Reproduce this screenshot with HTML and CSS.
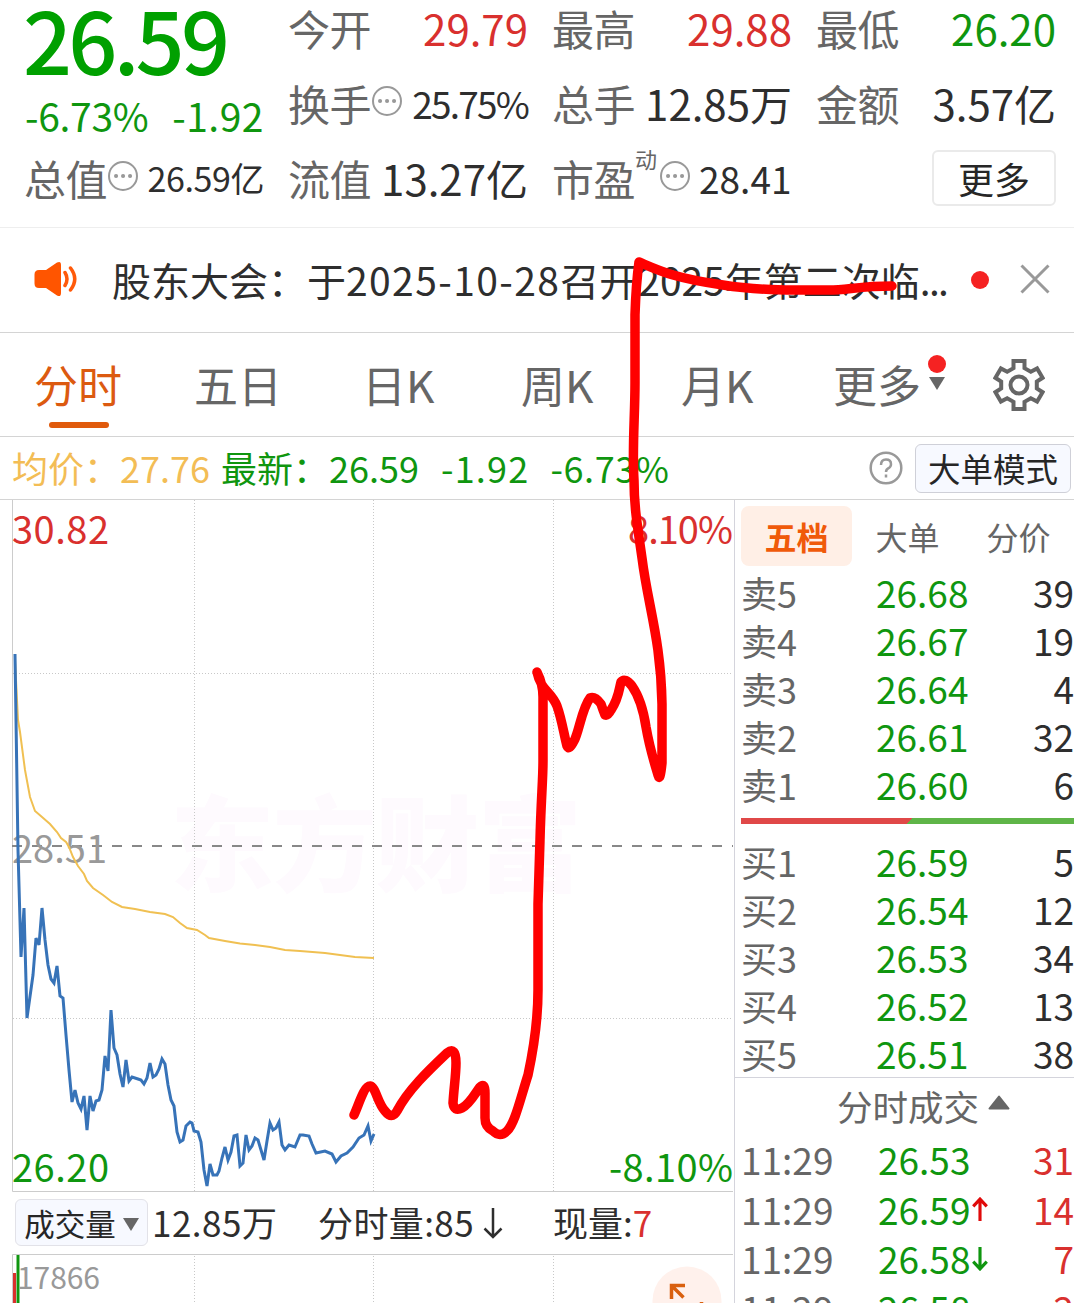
FILE: index.html
```
<!DOCTYPE html>
<html lang="zh-CN">
<head>
    <meta charset="UTF-8">
    <meta name="viewport" content="width=device-width, initial-scale=1.0">
    <title>分时行情</title>
    <link rel="stylesheet" href="styles.css">
</head>
<body>
    <header class="quote">
        <div class="price-block">
            <div class="price">26.59</div>
            <div class="change"><span>-6.73%</span><span class="amount">-1.92</span></div>
        </div>
        <div class="cell"><label>今开</label><b class="up">29.79</b></div>
        <div class="cell"><label>最高</label><b class="up">29.88</b></div>
        <div class="cell"><label>最低</label><b class="down">26.20</b></div>
        <div class="cell">
            <label>换手</label>
            <svg class="dots" viewBox="0 0 32 32"><circle cx="16" cy="16" r="14"/><path d="M9 16h.1M16 16h.1M23 16h.1"/></svg>
            <b class="mid">25.75%</b>
        </div>
        <div class="cell"><label>总手</label><b>12.85万</b></div>
        <div class="cell"><label>金额</label><b>3.57亿</b></div>
        <div class="cell">
            <label>总值</label>
            <svg class="dots" viewBox="0 0 32 32"><circle cx="16" cy="16" r="14"/><path d="M9 16h.1M16 16h.1M23 16h.1"/></svg>
            <b class="small">26.59亿</b>
        </div>
        <div class="cell"><label>流值</label><b>13.27亿</b></div>
        <div class="cell">
            <label>市盈</label><sup>动</sup>
            <svg class="dots" viewBox="0 0 32 32"><circle cx="16" cy="16" r="14"/><path d="M9 16h.1M16 16h.1M23 16h.1"/></svg>
            <b class="pe">28.41</b>
        </div>
        <div class="cell"><button class="more">更多</button></div>
    </header>

    <div class="notice">
        <svg class="horn" viewBox="0 0 44 36">
            <path class="horn-body" d="M5 9h7L23 1.500Q27 -.5 27 4v28q0 4.500-4 2.500L12 27H5q-4.500 0-4.500-4.500v-9Q.5 9 5 9z"/>
            <path d="M31 11.500q4 6.500 0 13M36.500 7q8.500 11 0 22"/>
        </svg>
        <p>股东大会：于<span class="date">2025-10-28</span>召开2025年第二次临<span class="ell">...</span></p>
        <i class="red-dot"></i>
        <svg class="close" viewBox="0 0 30 30"><path d="M1.500 1.500l27 27M28.500 1.500l-27 27"/></svg>
    </div>

    <nav class="tabs">
        <a class="active">分时</a>
        <a>五日</a>
        <a>日K</a>
        <a>周K</a>
        <a>月K</a>
        <a class="has-dot">更多<i class="caret"></i></a>
        <svg class="gear" viewBox="0 0 52 52">
            <path d="M20.500 2h11v7.200l6.300 3.600 6.300-3.400 5.500 9.400-5.800 3.700v7l5.800 3.700-5.500 9.400-6.300-3.400-6.300 3.600V50h-11v-7.200l-6.300-3.600-6.300 3.400-5.500-9.400 5.800-3.700v-7l-5.800-3.700 5.500-9.400 6.300 3.400 6.300-3.600z"/>
            <circle cx="26" cy="26" r="8.500"/>
        </svg>
    </nav>

    <div class="summary">
        <span class="avg">均价：27.76</span>
        <span class="last">最新：26.59</span>
        <span class="last diff">-1.92</span>
        <span class="last pct">-6.73%</span>
        <svg class="help" viewBox="0 0 34 34"><circle cx="17" cy="17" r="15.300"/><path d="M12 14q0-5.500 5-5.500t5 4.700q0 2.500-2.500 4Q17 18.500 17 21M17 23.500v3"/></svg>
        <button class="mode">大单模式</button>
    </div>

    <main class="main">
        <section class="left">
            <svg class="chart" viewBox="0 500 734 692">
                <text class="watermark" x="170" y="884" textLength="412">东方财富</text>
                <path class="grid" d="M194.500 500V1191M373.500 500V1191M553.500 500V1191M13 673.500H733M13 1018.500H733"/>
                <path class="frame" d="M12.500 500V1191.500H733"/>
                <path class="prev" d="M12 846H733"/>
                <text class="up" x="12" y="544" textLength="97">30.82</text>
                <text class="up" x="628" y="544" textLength="105">8.10%</text>
                <text class="flat" x="12" y="863" textLength="95">28.51</text>
                <text class="down" x="12" y="1182" textLength="97">26.20</text>
                <text class="down" x="609" y="1182" textLength="124">-8.10%</text>
                <polyline class="avg-line" points="15,660 17,700 18,720 20,732 25,770 30,797 35,811 42,817 50,824 57,832 61,838 66,842 69,847 73,857 78,866 84,874 87,881 93,888 103,895 112,902 122,907 135,909 150,912 165,914 173,917 180,923 187,928 197,930 205,935 209,938 225,941 240,943.5 255,945 270,947 285,950 300,951 325,953 340,955 355,957 374,958"/>
                <polyline class="price-line" points="15,654 18,850 21,957 24,908 27,1018 33,975 36,938 39,945 42,908 45,940 48,965 51,979 54,983 57,966 60,996 63,998 66,1035 69,1070 72,1102 75,1090 78,1103 81,1109 84,1096 87,1130 90,1096 93,1111 96,1101 99,1100 102,1090 105,1056 108,1071 111,1010 114,1048 117,1055 120,1074 123,1087 126,1060 129,1081 132,1077 138,1079 141,1080 144,1084 147,1078 150,1063 153,1077 156,1075 159,1069 162,1059 165,1064 168,1085 171,1100 174,1106 177,1132 180,1142 183,1140 186,1126 190,1122 192,1123 194,1131 198,1132 201,1142 204,1170 207,1186 210,1164 213,1175 217,1175 219,1171 222,1158 225,1147 228,1160 231,1152 234,1136 237,1135 240,1166 243,1163 246,1135 249,1150 252,1146 255,1138 258,1140 261,1150 264,1160 267,1141 270,1123 273,1130 276,1128 279,1122 282,1145 285,1150 289,1145 295,1147 300,1135 303,1135 309,1136 312,1144 316,1153 325,1151 332,1154 336,1162 341,1156 347,1153 353,1147 359,1138 364,1135 368,1126 371,1141 374,1134"/>
            </svg>
            <div class="volume-bar">
                <button class="picker">成交量<i class="caret"></i></button>
                <span class="total">12.85万</span>
                <span class="minute">分时量:85<svg viewBox="0 0 20 32"><path d="M10 1v29M1.500 21.500L10 30l8.500-8.500"/></svg></span>
                <span class="now">现量:<em class="up">7</em></span>
            </div>
            <svg class="volume" viewBox="0 1254 734 49">
                <path class="grid" d="M194.500 1256V1303M373.500 1256V1303M553.500 1256V1303"/>
                <path class="frame" d="M12.500 1303V1254.500H733"/>
                <path class="bar-up" d="M14.500 1273V1303"/>
                <path class="bar-down" d="M18 1255V1303"/>
                <text class="vol-max" x="17" y="1289" textLength="83">17866</text>
                <circle class="zoom-bg" cx="687" cy="1301" r="34.500"/>
                <path class="zoom-arrow" d="M671.500 1299V1285.500H685M672 1286L683.500 1297.500M701.500 1302V1310"/>
            </svg>
        </section>

        <aside class="book">
            <div class="book-tabs">
                <a class="active">五档</a><a>大单</a><a>分价</a>
            </div>
            <ul class="levels">
                <li><span>卖5</span><b>26.68</b><em>39</em></li>
                <li><span>卖4</span><b>26.67</b><em>19</em></li>
                <li><span>卖3</span><b>26.64</b><em>4</em></li>
                <li><span>卖2</span><b>26.61</b><em>32</em></li>
                <li><span>卖1</span><b>26.60</b><em>6</em></li>
            </ul>
            <div class="ratio"></div>
            <ul class="levels buy">
                <li><span>买1</span><b>26.59</b><em>5</em></li>
                <li><span>买2</span><b>26.54</b><em>12</em></li>
                <li><span>买3</span><b>26.53</b><em>34</em></li>
                <li><span>买4</span><b>26.52</b><em>13</em></li>
                <li><span>买5</span><b>26.51</b><em>38</em></li>
            </ul>
            <h3 class="deals-title">分时成交<svg viewBox="0 0 22 15"><path d="M11 1.500L20.500 13.500H1.500z"/></svg></h3>
            <ul class="levels deals">
                <li><span>11:29</span><b>26.53</b><em class="up">31</em></li>
                <li><span>11:29</span><b>26.59<svg class="up" viewBox="0 0 16 24"><path d="M8 23V2M1.500 9L8 2l6.500 7"/></svg></b><em class="up">14</em></li>
                <li><span>11:29</span><b>26.58<svg viewBox="0 0 16 24"><path d="M8 1v21M1.500 15L8 22l6.500-7"/></svg></b><em class="up">7</em></li>
                <li><span>11:29</span><b>26.58</b><em class="up">2</em></li>
            </ul>
        </aside>
    </main>

    <!-- freehand marker line over the page -->
    <svg class="marker" viewBox="0 0 1074 1303">
        <path d="M354 1115C359 1104 364 1086 370 1086C376 1087 377 1102 385 1111Q392 1120 397 1111C408 1090 428 1071 447 1053Q456 1046 456 1063C456 1075 454 1087 453 1103Q454 1112 462 1108C470 1104 476 1092 480 1087Q485 1082 485 1093L485 1118Q485 1127 493 1131Q500 1138 507 1131C515 1123 520 1100 528 1075C534 1047 538 1020 538 990L538 904L540 840C541 800 543 780 543 761L543 697Q543 684 537 672C541 691 551 691 557 706C562 720 564 735 567 746Q569 751 574 741C579 732 582 708 590 698Q595 696 601 704Q603 710 605 715Q608 716 611 710C619 698 619 689 621 682Q625 677 632 686C639 696 643 707 646 727C650 750 654 761 658 775Q660 783 662 763L662 704C661 640 648 606 642 558C637 523 634 505 634 480C632 450 635 415 635 383L635 315Q636 284 639 262C658 270 673 278 723 285C760 291 795 290 829 290C847 290 860 286 892 286"/>
    </svg>
</body>
</html>
```
FILE: styles.css
```
* {
    box-sizing: border-box;
}
body {
    margin: 0;
    width: 1074px;
    height: 1303px;
    overflow: hidden;
    position: relative;
    background-color: #fff;
    color: #2e2e2e;
    font-family: "Noto Sans CJK SC", sans-serif;
}
b, em, i, h3 {
    font-weight: normal;
    font-style: normal;
}
ul, p, h3 {
    margin: 0;
    padding: 0;
    list-style: none;
}
svg {
    display: block;
    fill: none;
    flex: none;
}
button {
    font-family: inherit;
    color: #262626;
    padding: 0;
}
.up {
    color: #d9302e;
    fill: #d9302e;
}
.down {
    color: #0f960f;
    fill: #0f960f;
}

/* quote header */
.quote {
    height: 228px;
    padding: 0 18px 0 25px;
    display: grid;
    grid-template-columns: repeat(4, 239px);
    grid-template-rows: repeat(3, 60px);
    column-gap: 25px;
    row-gap: 15px;
    border-bottom: 1px solid #eee;
}
.price-block {
    grid-row: span 2;
    color: #00a000;
}
.price {
    height: 82px;
    margin-left: -2px;
    line-height: 75px;
    font-size: 86px;
    font-weight: 500;
    letter-spacing: -3.700px;
}
.change {
    display: flex;
    justify-content: space-between;
    font-size: 39px;
    line-height: 66px;
    letter-spacing: -.3px;
    color: #0f960f;
}
.change .amount {
    letter-spacing: .5px;
}
.cell {
    display: flex;
    align-items: center;
    font-size: 42px;
    line-height: 56px;
    padding-bottom: 4px;
    white-space: nowrap;
}
.cell label {
    color: #666;
    margin-left: -1px;
    letter-spacing: -.5px;
}
.cell b {
    margin-left: auto;
}
.cell .mid {
    font-size: 37px;
    letter-spacing: -1.800px;
}
.cell .small {
    font-size: 34px;
    letter-spacing: -.4px;
}
.cell .pe {
    font-size: 37px;
    margin-left: 8px;
}
.cell sup {
    font-size: 22px;
    line-height: 16px;
    margin-right: 2px;
    color: #666;
    align-self: flex-start;
}
.dots {
    width: 32px;
    height: 32px;
    margin-top: -4px;
    stroke: #999;
    stroke-width: 2;
}
.dots path {
    stroke-width: 4;
    stroke-linecap: round;
}
.more {
    width: 124px;
    height: 56px;
    margin-left: auto;
    background-color: #fff;
    border: 2px solid #eaeaea;
    border-radius: 6px;
    font-size: 36px;
    line-height: 46px;
}

/* notice */
.notice {
    height: 105px;
    padding-left: 34px;
    display: flex;
    align-items: center;
    border-bottom: 1px solid #d4d4d4;
}
.horn {
    width: 44px;
    height: 36px;
    margin-top: -2px;
    stroke: #ff5a0a;
    stroke-width: 3.500;
    stroke-linecap: round;
}
.horn-body {
    fill: #ff5500;
    stroke: none;
}
.notice p {
    width: 838px;
    margin: -3px 21px 0 34px;
    font-size: 39px;
    white-space: nowrap;
}
.date {
    letter-spacing: 1.400px;
}
.ell {
    letter-spacing: -1.800px;
}
.red-dot {
    width: 18px;
    height: 18px;
    border-radius: 50%;
    background-color: #f52222;
}
.close {
    width: 30px;
    height: 30px;
    margin-top: -2px;
    margin-left: 31px;
    stroke: #999;
    stroke-width: 3;
}

/* chart tabs */
.tabs {
    height: 104px;
    padding-left: 34px;
    display: grid;
    grid-template-columns: 160px 168px 159px 160px 152px 160px 52px;
    align-items: center;
    border-bottom: 1px solid #d4d4d4;
    font-size: 44px;
    color: #666;
}
.tabs a {
    position: relative;
    line-height: 100px;
    height: 102px;
    white-space: nowrap;
}
.tabs .active {
    color: #dc5a10;
}
.tabs .active::after {
    content: "";
    position: absolute;
    left: 15px;
    top: 88px;
    width: 60px;
    height: 6px;
    border-radius: 3px;
    background-color: #e05a0c;
}
.has-dot::after {
    content: "";
    position: absolute;
    left: 95px;
    top: 21px;
    width: 18px;
    height: 18px;
    border-radius: 50%;
    background-color: #f52222;
}
.caret {
    display: inline-block;
    border: 8px solid transparent;
    border-top: 13px solid #666;
    border-bottom: 0;
}
.has-dot .caret {
    margin-left: 8px;
    vertical-align: 13px;
}
.gear {
    width: 52px;
    height: 52px;
    stroke: #666;
    stroke-width: 4;
}

/* summary line */
.summary {
    height: 63px;
    padding: 0 3px 0 12px;
    display: flex;
    align-items: center;
    border-bottom: 1px solid #d4d4d4;
    font-size: 36px;
    line-height: 56px;
}
.summary span {
    margin-top: -3px;
    white-space: nowrap;
}
.avg {
    width: 209px;
    color: #f3bd55;
}
.last {
    color: #0f960f;
}
.summary .diff {
    margin-left: 22px;
    letter-spacing: 1.200px;
}
.summary .pct {
    margin-left: 21px;
    letter-spacing: .6px;
}
.help {
    width: 34px;
    height: 34px;
    margin-left: auto;
    stroke: #999;
    stroke-width: 2.500;
}
.mode {
    width: 156px;
    height: 49px;
    margin-left: 12px;
    background-color: #f7f9ff;
    border: 1px solid #cfd0d8;
    border-radius: 6px;
    font-size: 32.500px;
    line-height: 44px;
}

/* chart area */
.main {
    display: flex;
}
.left {
    width: 734px;
}
.chart {
    width: 734px;
    height: 692px;
    font-size: 38px;
}
.watermark {
    font-size: 104px;
    font-weight: 900;
    fill: #fefafe;
}
.grid {
    stroke: #c8c8c8;
    stroke-dasharray: 1 2;
}
.frame {
    stroke: #ccc;
}
.prev {
    stroke: #888;
    stroke-width: 1.800;
    stroke-dasharray: 10 10;
}
.flat {
    fill: #999;
}
.avg-line {
    stroke: #f0c052;
    stroke-width: 2;
}
.price-line {
    stroke: #3773b8;
    stroke-width: 3;
}
.volume-bar {
    height: 62px;
    padding-left: 15px;
    display: flex;
    align-items: center;
    font-size: 35px;
    white-space: nowrap;
}
.volume-bar span {
    margin-top: -3px;
}
.picker {
    width: 133px;
    height: 47px;
    margin-top: -1px;
    background-color: #f7f9ff;
    border: 1px solid #e2e2e8;
    border-radius: 6px;
    font-size: 30.500px;
    line-height: 42px;
}
.picker .caret {
    margin-left: 7px;
    vertical-align: 5px;
}
.total {
    width: 166px;
    margin-left: 4px;
    letter-spacing: .5px;
}
.minute {
    width: 235px;
    display: flex;
    align-items: center;
    letter-spacing: .4px;
}
.minute svg {
    width: 20px;
    height: 32px;
    margin: 3px 0 0 9px;
    stroke: #2e2e2e;
    stroke-width: 2.500;
}
.volume {
    width: 734px;
    height: 49px;
}
.bar-up {
    stroke: #d9302e;
    stroke-width: 3;
}
.bar-down {
    stroke: #0f960f;
    stroke-width: 3;
}
.vol-max {
    font-size: 30px;
    fill: #999;
}
.zoom-bg {
    fill: #fff1ec;
}
.zoom-arrow {
    stroke: #d9600f;
    stroke-width: 3.500;
}

/* order book */
.book {
    width: 340px;
    height: 804px;
    padding-left: 6px;
    border-left: 1px solid #d4d4dc;
    font-size: 37px;
    overflow: hidden;
}
.book-tabs {
    height: 70px;
    padding-top: 6px;
    display: flex;
    font-size: 32px;
    line-height: 60px;
    color: #666;
}
.book-tabs a {
    width: 111px;
    height: 60px;
    text-align: center;
}
.book-tabs .active {
    border-radius: 8px;
    background-color: #ffefe6;
    color: #f05a0a;
    font-weight: bold;
}
.levels li {
    height: 48px;
    line-height: 44px;
    display: grid;
    grid-template-columns: 135px 1fr auto;
}
.levels span {
    color: #666;
    font-size: 36px;
}
.levels b {
    color: #0f960f;
    display: flex;
}
.ratio {
    height: 6px;
    margin: 8px 0 15px;
    background: linear-gradient(135deg, #e04848 0 121px, #5fb548 121px);
}
.deals-title {
    height: 60px;
    margin: -2px 0 0 -6px;
    padding-left: 102px;
    display: flex;
    border-top: 1px solid #d4d4dc;
    font-size: 35.500px;
    line-height: 55px;
    color: #666;
}
.deals-title svg {
    width: 22px;
    height: 15px;
    margin: 17px 0 0 9px;
    fill: #666;
    stroke: #666;
    stroke-width: 2;
    stroke-linejoin: round;
}
.deals li {
    height: 49.500px;
    grid-template-columns: 137px 1fr auto;
}
.deals span {
    font-size: 37px;
}
.deals svg {
    width: 18px;
    height: 25px;
    margin: 10px 0 0 1px;
    stroke: #0f960f;
    stroke-width: 3;
    fill: none;
}
.deals svg.up {
    stroke: #e00a0a;
}

.marker {
    position: absolute;
    left: 0;
    top: 0;
    width: 1074px;
    height: 1303px;
    stroke: #f00;
    stroke-width: 9.500;
    stroke-linecap: round;
    stroke-linejoin: round;
}
```
